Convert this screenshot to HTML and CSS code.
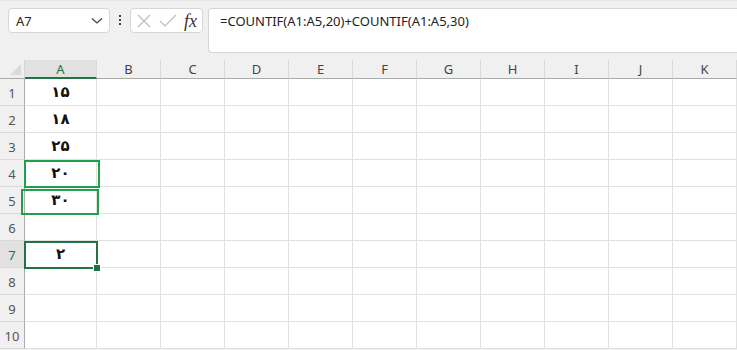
FILE: index.html
```html
<!DOCTYPE html>
<html lang="fa">
<head>
    <meta charset="UTF-8">
    <title>Sheet</title>
    <link rel="stylesheet" href="styles.css">
</head>
<body>
    <div class="toolbar">
        <div class="name-box">
            <span>A7</span>
            <svg width="12" height="8" viewBox="0 0 12 8"><path d="M1 1.5 L6 6 L11 1.5" fill="none" stroke="#444" stroke-width="1.3"/></svg>
        </div>
        <div class="dots"><i></i><i></i><i></i></div>
        <div class="fx-box">
            <svg width="16" height="16" viewBox="0 0 16 16"><path d="M2 2 L14 14 M14 2 L2 14" stroke="#bdbdbd" stroke-width="1.2"/></svg>
            <svg width="18" height="16" viewBox="0 0 18 16"><path d="M1 8 L6 13 L17 2" fill="none" stroke="#bdbdbd" stroke-width="1.2"/></svg>
            <span class="fx">fx</span>
        </div>
        <div class="formula">=COUNTIF(A1:A5,20)+COUNTIF(A1:A5,30)</div>
    </div>

    <div class="sheet">
        <div class="grid" id="grid"></div>
        <div class="sel sel-a4"></div>
        <div class="sel sel-a5"></div>
        <div class="sel sel-a7"><span class="handle"></span></div>
    </div>

    <script>
        const cols = ['A', 'B', 'C', 'D', 'E', 'F', 'G', 'H', 'I', 'J', 'K'];
        const values = { 1: '۱۵', 2: '۱۸', 3: '۲۵', 4: '۲۰', 5: '۳۰', 7: '۲' };
        const grid = document.getElementById('grid');

        let html = '<div class="corner"><span></span></div>';
        cols.forEach(c => {
            html += `<div class="col-head ${c === 'A' ? 'active' : ''}">${c}</div>`;
        });
        for (let r = 1; r <= 10; r++) {
            html += `<div class="row-head ${r === 7 ? 'active' : ''}">${r}</div>`;
            cols.forEach(c => {
                const v = c === 'A' && values[r] ? values[r] : '';
                html += `<div class="cell">${v}</div>`;
            });
        }
        grid.innerHTML = html;
    </script>
</body>
</html>
```

FILE: styles.css
```css
body {
    margin: 0;
    width: 737px;
    height: 350px;
    overflow: hidden;
    background-color: #f0f0f0;
    font-family: "Noto Sans", "Open Sans", sans-serif;
    color: #222;
}
.toolbar {
    display: flex;
    align-items: flex-start;
    height: 52px;
    padding: 7px 0 0 8px;
    border-top: 1px solid #e4e4e4;
    box-sizing: content-box;
}
.name-box {
    display: flex;
    align-items: center;
    justify-content: space-between;
    width: 102px;
    height: 25px;
    padding: 0 6px 0 7px;
    box-sizing: border-box;
    background-color: #fff;
    border: 1px solid #d6d6d6;
    border-radius: 4px;
    font-size: 13px;
}
.dots {
    display: flex;
    flex-direction: column;
    gap: 2px;
    width: 20px;
    padding-top: 7px;
    align-items: center;
}
.dots i {
    width: 2px;
    height: 2px;
    background-color: #444;
}
.fx-box {
    display: flex;
    align-items: center;
    gap: 7px;
    width: 73px;
    height: 25px;
    padding-left: 5px;
    box-sizing: border-box;
    background-color: #fff;
    border: 1px solid #d6d6d6;
    border-radius: 4px;
}
.fx {
    font-family: "Liberation Serif", serif;
    font-style: italic;
    font-size: 18px;
    line-height: 1;
    color: #333;
}
.formula {
    flex: 1;
    height: 45px;
    margin-left: 5px;
    padding: 3px 0 0 11px;
    box-sizing: border-box;
    background-color: #fff;
    border: 1px solid #d6d6d6;
    border-right: none;
    border-radius: 4px 0 0 4px;
    font-size: 13px;
}
.sheet {
    position: relative;
    background-color: #fff;
}
.grid {
    display: grid;
    grid-template-columns: 25px 72px repeat(10, 64px);
    grid-template-rows: 19px repeat(10, 27px);
}
.corner {
    position: relative;
    background-color: #f0f0f0;
    border-right: 1px solid #d4d4d4;
    border-bottom: 1px solid #ababab;
}
.corner span {
    position: absolute;
    right: 3px;
    bottom: 3px;
    border-left: 11px solid transparent;
    border-bottom: 11px solid #dadada;
}
.col-head {
    display: flex;
    align-items: center;
    justify-content: center;
    background-color: #f0f0f0;
    border-right: 1px solid #dadada;
    border-bottom: 1px solid #ababab;
    font-size: 13px;
    color: #444;
}
.col-head.active {
    background-color: #e1e1e1;
    color: #217346;
    border-bottom: 2px solid #217346;
}
.row-head {
    display: flex;
    align-items: flex-end;
    justify-content: center;
    padding-bottom: 3px;
    background-color: #f0f0f0;
    border-right: 1px solid #ababab;
    border-bottom: 1px solid #dadada;
    font-size: 13px;
    color: #555;
}
.row-head.active {
    background-color: #e1e1e1;
    color: #217346;
}
.cell {
    display: flex;
    align-items: center;
    justify-content: center;
    border-right: 1px solid #e1e1e1;
    border-bottom: 1px solid #e1e1e1;
    font-family: "DejaVu Sans", sans-serif;
    font-weight: bold;
    font-size: 15px;
    color: #111;
}
.sel {
    position: absolute;
    box-sizing: border-box;
    border: 2px solid #1ea04c;
}
.sel-a4 {
    left: 24px;
    top: 100px;
    width: 76px;
    height: 28px;
}
.sel-a5 {
    left: 21px;
    top: 129px;
    width: 78px;
    height: 26px;
}
.sel-a7 {
    left: 24px;
    top: 181px;
    width: 74px;
    height: 28px;
    border-color: #217346;
}
.handle {
    position: absolute;
    right: -5px;
    bottom: -5px;
    width: 6px;
    height: 6px;
    background-color: #217346;
    border: 1px solid #fff;
}
```
